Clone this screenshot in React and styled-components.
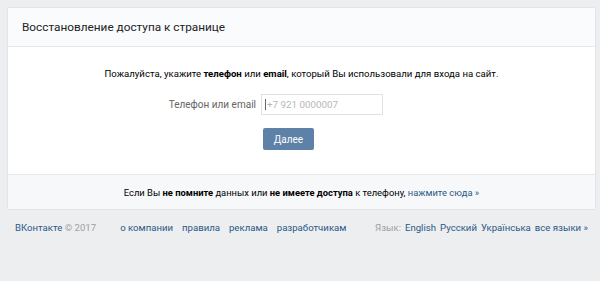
import React from "react";
import styled, { createGlobalStyle } from "styled-components";

const GlobalStyle = createGlobalStyle`
  html, body {
    margin: 0;
    padding: 0;
    background: #edeef0;
    font-family: Roboto, "Open Sans", "DejaVu Sans", sans-serif;
    color: #000;
  }
`;

const Page = styled.div`
  width: 600px;
  height: 281px;
  padding: 8px 5px 0 8px;
  box-sizing: border-box;
`;

const Card = styled.div`
  background: #fff;
  border-radius: 2px;
  box-shadow: 0 0 0 1px #e3e4e8, 0 1px 0 0 #d7d8db;
`;

const Header = styled.div`
  height: 38px;
  display: flex;
  align-items: center;
  padding: 0 14px;
  background: #fafbfc;
  border-bottom: 1px solid #e7e8ec;
  font-size: 11.8px;
  color: #222;
`;

const Body = styled.div`
  display: flex;
  flex-direction: column;
  padding: 20px 0 24px;
`;

const Lead = styled.p`
  margin: 0;
  text-align: center;
  font-size: 9.6px;
  color: #000;
  line-height: 13px;
`;

const Form = styled.div`
  display: grid;
  grid-template-columns: 248px 122px;
  column-gap: 5px;
  row-gap: 13px;
  align-items: center;
  margin-top: 14px;
`;

const Label = styled.span`
  text-align: right;
  white-space: nowrap;
  font-size: 10px;
  color: #656565;
`;

const Field = styled.div`
  height: 21px;
  box-sizing: border-box;
  border: 1px solid #dfe2e6;
  background: #fff;
  display: flex;
  align-items: center;
  gap: 1px;
  padding-left: 3px;
  font-size: 9.8px;
  color: #b8b8b8;
`;

const Caret = styled.span`
  width: 1px;
  height: 11px;
  background: #666;
`;

const Button = styled.button`
  grid-column: 2;
  justify-self: start;
  margin-left: 2px;
  width: 51px;
  height: 22px;
  border: none;
  border-radius: 2px;
  background: #5e81a8;
  color: #fff;
  font-family: inherit;
  font-size: 10px;
  padding: 0;
`;

const Foot = styled.div`
  background: #f7f8fa;
  border-top: 1px solid #e7e8ec;
  height: 34px;
  display: flex;
  align-items: center;
  justify-content: center;
  font-size: 9.4px;
  color: #000;
`;

const Link = styled.a`
  color: ${({ $muted }) => ($muted ? "#a0a0a0" : "#2a5885")};
  text-decoration: none;
`;

const PageFooter = styled.div`
  display: flex;
  align-items: center;
  white-space: nowrap;
  padding: 13px 7px 0 7px;
  font-size: 9.6px;
`;

const Copy = styled.span`
  color: #2a5885;
  & > span {
    color: #a0a0a0;
  }
`;

const Nav = styled.div`
  display: flex;
  gap: 9px;
  margin-left: 24px;
  color: #2a5885;
`;

const Langs = styled.div`
  display: flex;
  gap: 4px;
  margin-left: auto;
  color: #2a5885;
`;

export default function App() {
  return (
    <Page>
      <GlobalStyle />
      <Card>
        <Header>Восстановление доступа к странице</Header>
        <Body>
          <Lead>
            Пожалуйста, укажите <b>телефон</b> или <b>email</b>, который Вы
            использовали для входа на сайт.
          </Lead>
          <Form>
            <Label>Телефон или email</Label>
            <Field>
              <Caret />
              +7 921 0000007
            </Field>
            <Button>Далее</Button>
          </Form>
        </Body>
        <Foot>
          <span>
            Если Вы <b>не помните</b> данных или <b>не имеете доступа</b> к
            телефону, <Link href="#">нажмите сюда »</Link>
          </span>
        </Foot>
      </Card>
      <PageFooter>
        <Copy>
          ВКонтакте <span>© 2017</span>
        </Copy>
        <Nav>
          <span>о компании</span>
          <span>правила</span>
          <span>реклама</span>
          <span>разработчикам</span>
        </Nav>
        <Langs>
          <Link $muted>Язык:</Link>
          <span>English</span>
          <span>Русский</span>
          <span>Українська</span>
          <span>все языки »</span>
        </Langs>
      </PageFooter>
    </Page>
  );
}
